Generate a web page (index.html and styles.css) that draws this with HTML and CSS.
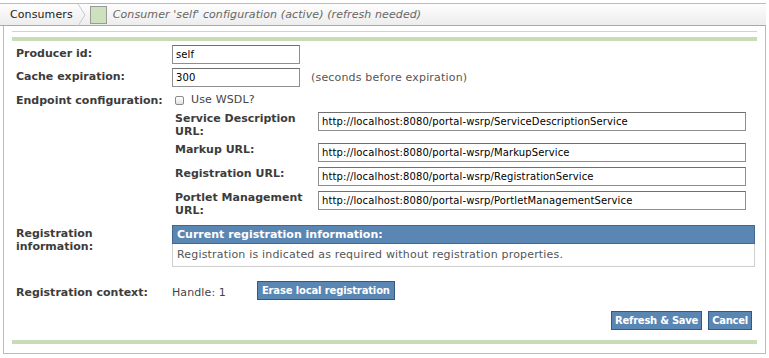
FILE: index.html
```html
<!DOCTYPE html>
<html>
<head>
<meta charset="utf-8">
<link rel="stylesheet" href="styles.css">
</head>
<body>
<div class="crumbs">
  <span class="crumb-root">Consumers</span>
  <svg class="chev" width="10" height="22" viewBox="0 0 10 22"><polyline points="1,0 8,11 1,22" fill="none" stroke="#c8c8c8" stroke-width="1"/></svg>
  <span class="status-box"></span>
  <span class="crumb-title">Consumer 'self' configuration (active) (refresh needed)</span>
</div>
<div class="panel">
  <div class="rule-gray"></div>
  <div class="rule-green"></div>

  <div class="row row-producer">
    <div class="label">Producer id:</div>
    <div class="field"><input class="txt short" type="text" value="self"></div>
  </div>
  <div class="row row-cache">
    <div class="label">Cache expiration:</div>
    <div class="field"><input class="txt short" type="text" value="300"><span class="hint">(seconds before expiration)</span></div>
  </div>
  <div class="row row-endpoint">
    <div class="label">Endpoint configuration:</div>
    <div class="field col">
      <div class="wsdl"><span class="cbox"></span><span>Use WSDL?</span></div>
      <div class="sub">
        <div class="subrow">
          <div class="sublabel">Service Description URL:</div>
          <input class="txt long" type="text" value="http://localhost:8080/portal-wsrp/ServiceDescriptionService">
        </div>
        <div class="subrow">
          <div class="sublabel">Markup URL:</div>
          <input class="txt long" type="text" value="http://localhost:8080/portal-wsrp/MarkupService">
        </div>
        <div class="subrow">
          <div class="sublabel">Registration URL:</div>
          <input class="txt long" type="text" value="http://localhost:8080/portal-wsrp/RegistrationService">
        </div>
        <div class="subrow">
          <div class="sublabel">Portlet Management URL:</div>
          <input class="txt long" type="text" value="http://localhost:8080/portal-wsrp/PortletManagementService">
        </div>
      </div>
    </div>
  </div>
  <div class="row row-reginfo">
    <div class="label">Registration<br>information:</div>
    <div class="field">
      <div class="infotable">
        <div class="info-head">Current registration information:</div>
        <div class="info-body">Registration is indicated as required without registration properties.</div>
      </div>
    </div>
  </div>
  <div class="row row-context">
    <div class="label">Registration context:</div>
    <div class="field"><span class="handle">Handle: 1</span><button class="btn">Erase local registration</button></div>
  </div>
  <div class="actions">
    <button class="btn">Refresh &amp; Save</button>
    <button class="btn">Cancel</button>
  </div>
  <div class="rule-green bottom"></div>
</div>
</body>
</html>
```

FILE: styles.css
```css
* { box-sizing: border-box; }
body {
  margin: 0;
  padding-top: 3px;
  font-family: "DejaVu Sans", Verdana, sans-serif;
  font-size: 11px;
  color: #333;
  background: #fff;
}
.crumbs {
  width: 766px;
  height: 23px;
  border-top: 1px solid #bdbdbd;
  border-bottom: 1px solid #a9a9a9;
  background: linear-gradient(#fdfdfd, #ededed);
  display: flex;
  align-items: center;
  padding-left: 10px;
}
.crumb-root { color: #222; letter-spacing: 0.1px; }
.chev { margin-left: 4px; margin-right: 3px; flex: none; }
.status-box {
  width: 17px;
  height: 18px;
  background: #cde1bf;
  border: 1px solid #9a9a9a;
  flex: none;
}
.crumb-title {
  font-style: italic;
  color: #666;
  margin-left: 6px;
  letter-spacing: 0.1px;
}
.panel {
  margin-left: 3px;
  width: 763px;
  height: 328px;
  border: 1px solid #b4bcc4;
  border-top: none;
  padding: 5px 8px 0 8px;
}
.rule-gray { height: 1px; background: #d2d2d2; }
.rule-green { height: 4px; background: #c8dcb5; margin-top: 5px; }
.rule-green.bottom { margin-top: 10px; }
.row { display: flex; align-items: flex-start; padding-left: 4px; }
.label {
  width: 156px;
  flex: none;
  font-weight: bold;
  color: #3c3c3c;
  line-height: 13px;
  padding-top: 2px;
}
.field { display: flex; align-items: center; }
.field.col { flex-direction: column; align-items: flex-start; }
.row-producer { margin-top: 4px; }
.row-cache { margin-top: 4px; }
.row-endpoint { margin-top: 5px; }
.row-reginfo { margin-top: 3px; }
.row-context { margin-top: 17px; }
.txt {
  height: 19px;
  border: 1px solid #8e8e8e;
  border-top-color: #6f6f6f;
  padding: 0 0 0 3px;
  font-family: "DejaVu Sans", Verdana, sans-serif;
  font-size: 10px;
  letter-spacing: 0.12px;
  color: #000;
  background: #fff;
  outline: none;
}
.txt.short { width: 128px; }
.txt.long { width: 428px; }
.hint { margin-left: 11px; color: #555; letter-spacing: 0.18px; }
.wsdl { display: flex; align-items: center; height: 15px; margin-top: 0; color: #444; letter-spacing: 0.15px; }
.cbox {
  width: 9px;
  height: 9px;
  border: 1px solid #8a8a8a;
  border-radius: 2px;
  background: linear-gradient(#fff, #e2e2e2);
  margin: 2px 7px 0 3px;
}
.sub { margin-top: 5px; padding-left: 3px; }
.subrow { display: flex; align-items: flex-start; margin-bottom: 5px; }
.sublabel {
  width: 143px;
  flex: none;
  font-weight: bold;
  color: #3c3c3c;
  line-height: 13px;
  margin-top: 0;
}
.infotable { width: 583px; }
.info-head {
  height: 19px;
  background: #5a86b3;
  border: 1px solid #43678f;
  color: #fff;
  font-weight: bold;
  padding-left: 4px;
  line-height: 17px;
}
.info-body {
  height: 23px;
  border: 1px solid #cfcfcf;
  border-top: none;
  color: #555;
  padding-left: 4px;
  line-height: 21px;
  letter-spacing: 0.18px;
}
.handle { color: #444; margin-right: 31px; letter-spacing: 0.1px; }
.btn {
  height: 19px;
  background: #5a86b3;
  border: 1px solid #34587f;
  color: #fff;
  font-family: "DejaVu Sans", Verdana, sans-serif;
  font-size: 10px;
  font-weight: bold;
  letter-spacing: -0.15px;
  padding: 0 4px;
  margin-top: -3px;
}
.actions {
  display: flex;
  justify-content: flex-end;
  gap: 6px;
  margin-top: 11px;
  padding-right: 5px;
}
.actions .btn { margin-top: 0; padding: 0 3px; letter-spacing: -0.25px; }
```
